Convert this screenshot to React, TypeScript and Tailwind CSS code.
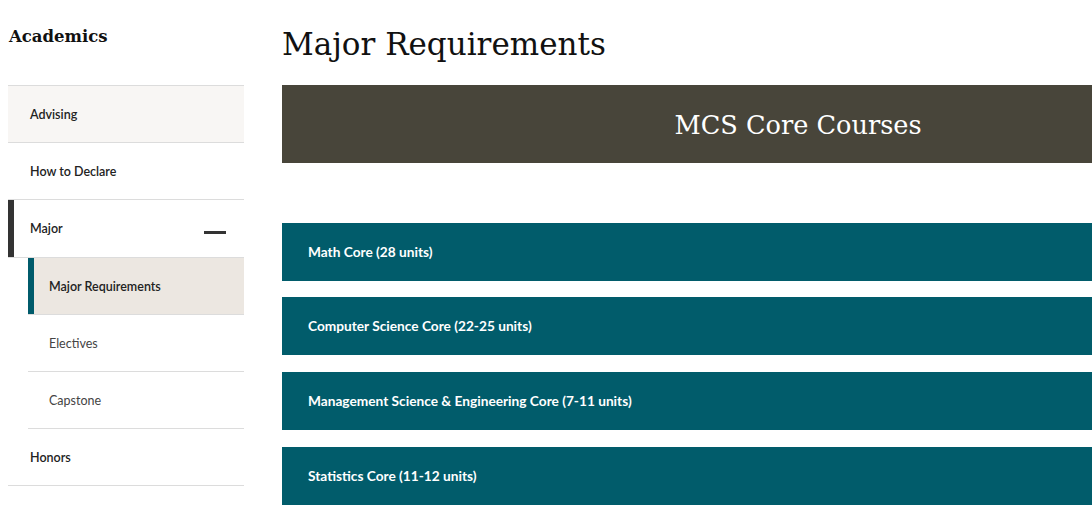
import React from "react";

const sans = "font-['Lato','Noto_Sans',sans-serif]";
const serif = "font-['DejaVu_Serif','Liberation_Serif',serif]";

function NavItem({ label, bg = "", bold = true, bar = "", sub = false, minus = false, h = "h-[57px]" }: { label: string; bg?: string; bold?: boolean; bar?: string; sub?: boolean; minus?: boolean; h?: string }) {
  return (
    <div className={`${sub ? "ml-[20px]" : ""} ${h} border-b border-[#dcdcdc] flex items-center relative ${bg}`}>
      {bar && <div className={`absolute left-0 top-0 bottom-0 w-[6px] ${bar}`} />}
      <span className={`${sub ? "pl-[21px]" : "pl-[22px]"} pt-[2px] text-[12.5px] ${bold ? "font-semibold text-[#222]" : "font-normal text-[#444]"}`}>{label}</span>
      {minus && <div className="absolute left-[196px] top-[31px] w-[22px] h-[3px] bg-[#333]" />}
    </div>
  );
}

export default function App() {
  const bars = [
    { t: "Math Core (28 units)", m: "" },
    { t: "Computer Science Core (22-25 units)", m: "mt-[16px]" },
    { t: "Management Science & Engineering Core (7-11 units)", m: "mt-[17px]" },
    { t: "Statistics Core (11-12 units)", m: "mt-[17px]" },
  ];
  return (
    <div className={`w-[1092px] h-[508px] overflow-hidden bg-white flex ${sans}`}>
      <aside className="w-[236px] ml-[8px] shrink-0">
        <h2 className={`${serif} text-[16.5px] font-bold text-[#111] mt-[25px] leading-[24px] h-[60px] pl-[1px]`}>Academics</h2>
        <div className="border-t border-[#dcdcdc]">
          <NavItem label="Advising" bg="bg-[#f8f6f4]" />
          <NavItem label="How to Declare" />
          <NavItem label="Major" bar="bg-[#333]" minus h="h-[58px]" />
          <NavItem label="Major Requirements" sub bg="bg-[#ece7e1]" bar="bg-[#005b6b]" />
          <NavItem label="Electives" sub bold={false} />
          <NavItem label="Capstone" sub bold={false} />
          <NavItem label="Honors" />
        </div>
      </aside>
      <main className="ml-[38px] w-[1032px] shrink-0">
        <h1 className={`${serif} text-[31px] text-[#111] mt-[22px] leading-[44px] h-[63px]`}>Major Requirements</h1>
        <div className="h-[78px] bg-[#48453a] flex items-center justify-center pt-[3px]">
          <span className={`${serif} text-[25.6px] text-white`}>MCS Core Courses</span>
        </div>
        <div className="mt-[60px] flex flex-col">
          {bars.map((b) => (
            <div key={b.t} className={`h-[58px] bg-[#015c6b] flex items-center pl-[26px] ${b.m}`}>
              <span className="text-white text-[13.7px] font-bold leading-[18px]">{b.t}</span>
            </div>
          ))}
        </div>
      </main>
    </div>
  );
}
